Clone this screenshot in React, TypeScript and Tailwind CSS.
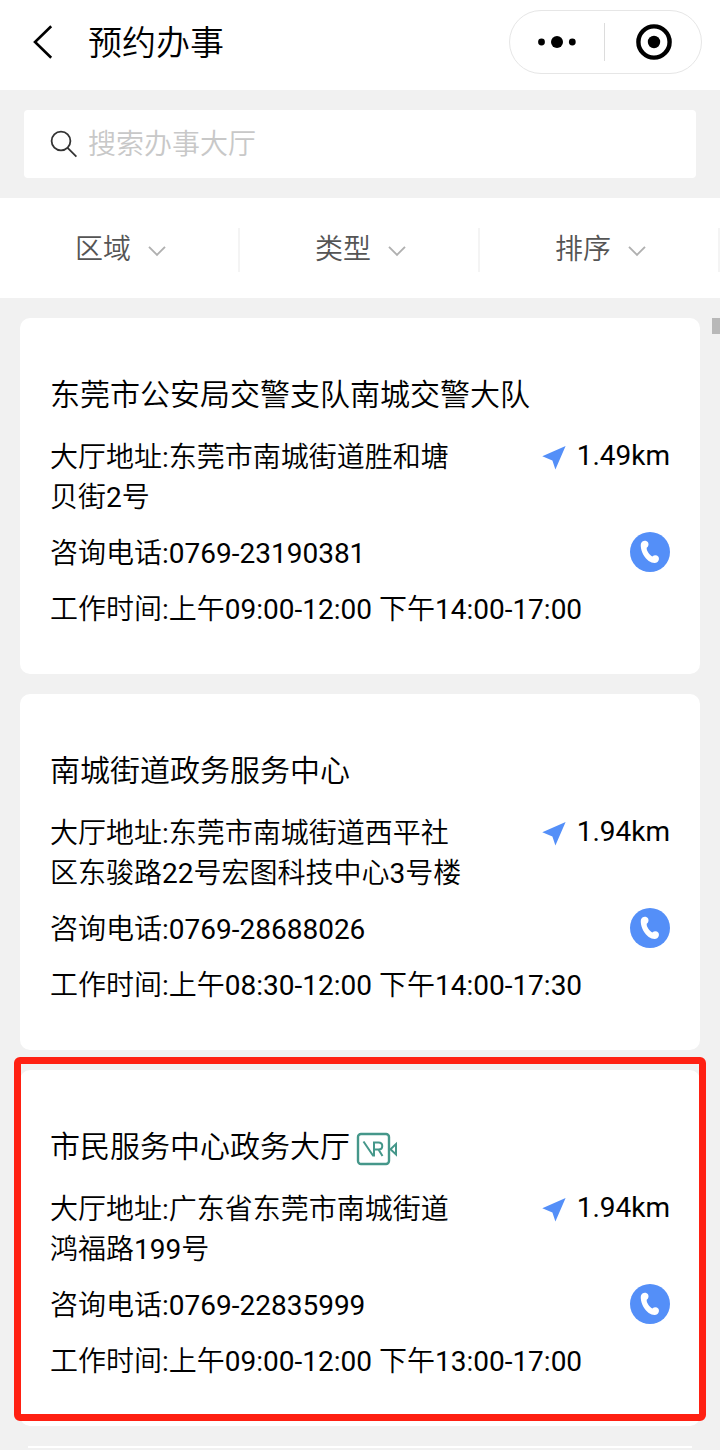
import type { ReactNode } from 'react';

const filters = ['区域', '类型', '排序'];

const halls = [
  {
    name: '东莞市公安局交警支队南城交警大队',
    address: '东莞市南城街道胜和塘贝街2号',
    phone: '0769-23190381',
    hours: '上午09:00-12:00 下午14:00-17:00',
    distance: '1.49km',
    vr: false,
    active: false,
  },
  {
    name: '南城街道政务服务中心',
    address: '东莞市南城街道西平社区东骏路22号宏图科技中心3号楼',
    phone: '0769-28688026',
    hours: '上午08:30-12:00 下午14:00-17:30',
    distance: '1.94km',
    vr: false,
    active: false,
  },
  {
    name: '市民服务中心政务大厅',
    address: '广东省东莞市南城街道鸿福路199号',
    phone: '0769-22835999',
    hours: '上午09:00-12:00 下午13:00-17:00',
    distance: '1.94km',
    vr: true,
    active: true,
  },
];

function VrIcon() {
  return (
    <svg width="42" height="34" viewBox="0 0 42 34" fill="none" stroke="#45978a" className="ml-[6px] mt-[3px] shrink-0">
      <rect x="2" y="2" width="31" height="30" rx="3" strokeWidth="2.4" />
      <path d="M7.5 9.5 L17 23.5 H18 V10.5 H22.5 C27.5 10.5 27.5 17.5 22.5 17.5 H18 M22.5 17.5 L26.5 24" strokeWidth="2" />
      <path d="M40 12 V22.5 L34.5 17.2 Z" strokeWidth="2" />
    </svg>
  );
}

function NavIcon() {
  return (
    <svg width="24" height="24" viewBox="0 0 24 24" fill="#548ff8" className="mt-[3px]">
      <path d="M23.6 0 L13.4 23.6 L10.4 14.4 L0.3 10.2 Z" />
    </svg>
  );
}

function PhoneIcon() {
  return (
    <svg width="40" height="40" viewBox="0 0 40 40" className="mb-[4px]">
      <circle cx="20" cy="20" r="20" fill="#548ff8" />
      <path
        d="M12.4 9.4 C14.4 8.2 17 8.6 18.1 10.6 C19 12.5 18.5 14.6 16.7 15.8 C16.4 18.8 19.2 22.8 22.3 24.4 C24.2 23 26.8 23 28.2 24.5 C29.5 26 29.1 28.4 27.5 29.9 C25.4 31.6 21.8 31 18.7 28.9 C14.2 25.7 11.2 19.8 10.8 14.6 C10.6 12.3 11 10.4 12.4 9.4 Z"
        fill="#fff"
      />
    </svg>
  );
}

function Header() {
  return (
    <header className="flex h-[90px] items-start bg-white pl-[32px] pr-[18px] pt-[10px]">
      <svg width="22" height="36" viewBox="0 0 22 36" fill="none" stroke="#000" strokeWidth="2.6" className="mt-[14px]">
        <path d="M19.2 2.2 L3 18 L19.2 33.8" />
      </svg>
      <h1 className="ml-[34px] flex-1 text-[34px] leading-[66px]">预约办事</h1>
      <div className="flex h-16 w-[193px] items-center rounded-full border border-[#e6e6e6]">
        <div className="flex flex-1 justify-center">
          <svg width="38" height="12" viewBox="0 0 38 12">
            <circle cx="3.5" cy="6" r="3.4" />
            <circle cx="19" cy="6" r="6" />
            <circle cx="34.3" cy="6" r="3.4" />
          </svg>
        </div>
        <div className="h-[38px] w-px bg-[#dcdcdc]" />
        <div className="flex flex-1 justify-center pl-[3px]">
          <svg width="36" height="36" viewBox="0 0 36 36">
            <circle cx="18" cy="18" r="15.6" fill="none" stroke="#000" strokeWidth="4.4" />
            <circle cx="18" cy="18" r="6.2" />
          </svg>
        </div>
      </div>
    </header>
  );
}

function SearchBar() {
  return (
    <div className="px-6 py-5">
      <div className="flex h-[68px] items-center rounded-sm bg-white pl-[26px]">
        <svg width="28" height="28" viewBox="0 0 28 28" fill="none" stroke="#333" strokeWidth="1.8">
          <circle cx="11" cy="11" r="9.4" />
          <path d="M17.6 17.8 L26.4 26.6" />
        </svg>
        <span className="ml-[10px] mt-[2px] text-[28px] leading-10 text-[#c8c8c8]">搜索办事大厅</span>
      </div>
    </div>
  );
}

function FilterBar() {
  return (
    <div className="grid h-[100px] grid-cols-3 bg-white pt-[4px]">
      {filters.map((label) => (
        <div key={label} className="flex items-center">
          <div className="flex flex-1 items-center pl-[75px] text-[28px] leading-[42px] text-[#555]">
            {label}
            <svg width="18" height="12" viewBox="0 0 18 12" fill="none" stroke="#b0b0b0" strokeWidth="1.9" className="ml-[17px] mt-[2px]">
              <path d="M1 1.8 L9 9.8 L17 1.8" />
            </svg>
          </div>
          <div className="h-11 w-0.5 bg-[#f4f4f4]" />
        </div>
      ))}
    </div>
  );
}

function Row({ children, action }: { children: ReactNode; action?: ReactNode }) {
  return (
    <div className="mt-4 flex h-10 items-center justify-between">
      <p className="whitespace-nowrap">{children}</p>
      {action}
    </div>
  );
}

function HallCard({ hall }: { hall: (typeof halls)[number] }) {
  return (
    <article className="relative h-[356px] rounded-[10px] bg-white pl-[30px] pr-[30px] pt-[57px] text-[28px] leading-10">
      <h2 className="flex h-10 items-center text-[30px]">
        {hall.name}
        {hall.vr && <VrIcon />}
      </h2>
      <div className="mt-[23px] flex items-start justify-between">
        <p className="w-[420px] break-all">{`大厅地址:${hall.address}`}</p>
        <div className="flex h-9 items-center gap-[11px]">
          <NavIcon />
          <span>{hall.distance}</span>
        </div>
      </div>
      <Row action={<PhoneIcon />}>{`咨询电话:${hall.phone}`}</Row>
      <Row>{`工作时间:${hall.hours}`}</Row>
      {hall.active && (
        <div className="absolute -left-[6px] -right-[6px] -top-[13px] h-[364px] rounded-[6px] border-[7px] border-[#ff2012]" />
      )}
    </article>
  );
}

export default function App() {
  return (
    <div
      lang="zh-CN"
      className="relative h-[1450px] w-[720px] overflow-hidden bg-[#f1f1f1] font-['Roboto','Noto_Sans_CJK_SC_DemiLight','Noto_Sans_CJK_SC',sans-serif] text-black"
    >
      <Header />
      <SearchBar />
      <FilterBar />
      <main className="flex flex-col gap-5 p-5">
        {halls.map((hall) => (
          <HallCard key={hall.name} hall={hall} />
        ))}
        {/* top edge of the next card in the list */}
        <div className="mx-[8px] h-[2px] bg-white" />
      </main>
      <div className="absolute right-0 top-[318px] h-4 w-2 bg-[#b8b8b8]" />
    </div>
  );
}
